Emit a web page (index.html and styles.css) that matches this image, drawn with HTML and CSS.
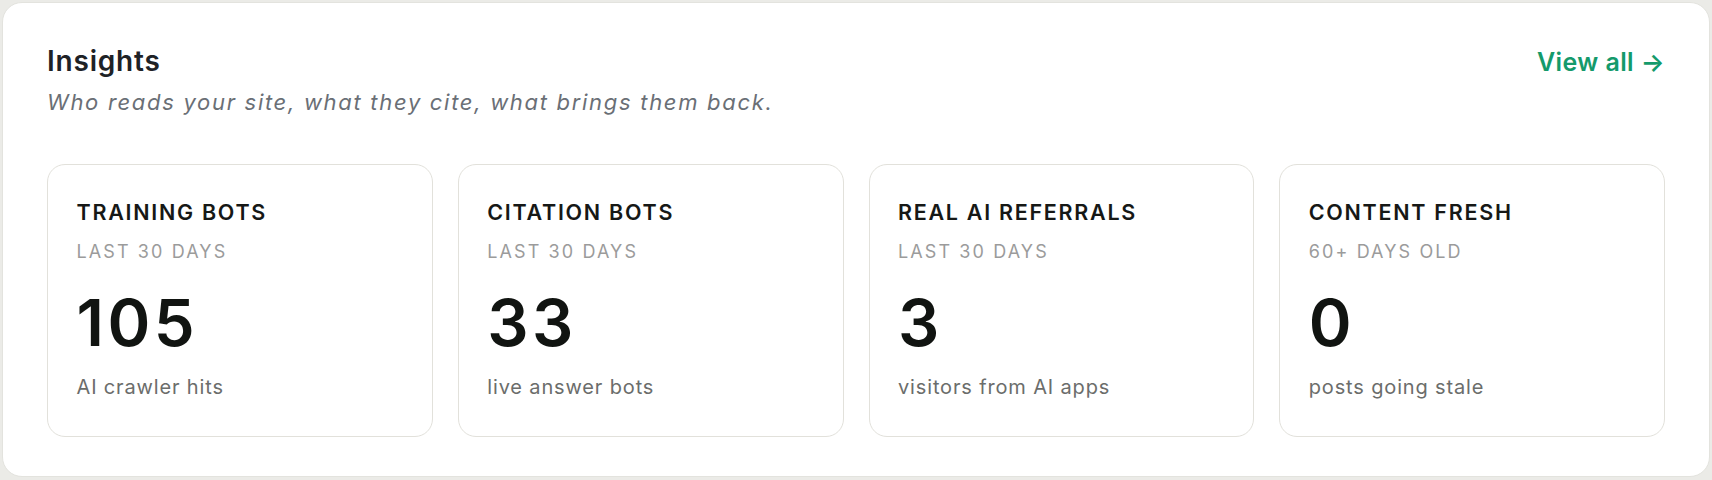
FILE: index.html
```html
<!DOCTYPE html>
<html lang="en">
<head>
<meta charset="utf-8">
<title>Insights</title>
<link rel="stylesheet" href="styles.css">
</head>
<body>
<section class="panel">
  <header class="panel-head">
    <div class="head-text">
      <h2 class="title">Insights</h2>
      <p class="subtitle">Who reads your site, what they cite, what brings them back.</p>
    </div>
    <a class="view-all" href="#">View all →</a>
  </header>
  <div class="stats">
    <div class="stat">
      <div class="stat-label">TRAINING BOTS</div>
      <div class="stat-period">LAST 30 DAYS</div>
      <div class="stat-value">105</div>
      <div class="stat-desc">AI crawler hits</div>
    </div>
    <div class="stat">
      <div class="stat-label">CITATION BOTS</div>
      <div class="stat-period">LAST 30 DAYS</div>
      <div class="stat-value">33</div>
      <div class="stat-desc">live answer bots</div>
    </div>
    <div class="stat">
      <div class="stat-label">REAL AI REFERRALS</div>
      <div class="stat-period">LAST 30 DAYS</div>
      <div class="stat-value">3</div>
      <div class="stat-desc">visitors from AI apps</div>
    </div>
    <div class="stat">
      <div class="stat-label">CONTENT FRESH</div>
      <div class="stat-period">60+ DAYS OLD</div>
      <div class="stat-value">0</div>
      <div class="stat-desc">posts going stale</div>
    </div>
  </div>
</section>
</body>
</html>
```

FILE: styles.css
```css
html, body {
  margin: 0;
  padding: 0;
}
body {
  background: #ebebe7;
  padding: 2px 2px 3px 2px;
  font-family: Inter, "Noto Sans", "Liberation Sans", sans-serif;
  box-sizing: border-box;
  height: 480px;
}
.panel {
  box-sizing: border-box;
  height: 475px;
  background: #ffffff;
  border: 1px solid #e3e3de;
  border-radius: 20px;
  padding: 42px 44px 0 44px;
}
.panel-head {
  display: flex;
  justify-content: space-between;
  align-items: flex-start;
}
.title {
  margin: 0;
  font-size: 28px;
  line-height: 1.2;
  font-weight: 600;
  letter-spacing: 0.8px;
  color: #1e2226;
}
.subtitle {
  margin: 8.5px 0 0 0;
  font-size: 22px;
  line-height: 1.4;
  font-style: italic;
  letter-spacing: 1.7px;
  color: #6a6f76;
}
.view-all {
  margin-top: 2px;
  font-size: 25px;
  line-height: 1.2;
  font-weight: 600;
  letter-spacing: 0.4px;
  color: #149a6b;
  text-decoration: none;
}
.stats {
  margin-top: 46px;
  display: grid;
  grid-template-columns: repeat(4, 1fr);
  gap: 25px;
}
.stat {
  box-sizing: border-box;
  height: 273px;
  border: 1.5px solid #e2e1db;
  border-radius: 18px;
  padding: 35.5px 28px 0 28.5px;
}
.stat-label {
  font-size: 21.5px;
  line-height: 1.2;
  font-weight: 600;
  letter-spacing: 0.08em;
  color: #161816;
}
.stat-period {
  margin-top: 15px;
  font-size: 18px;
  line-height: 1.2;
  letter-spacing: 2.1px;
  color: #9b9b9b;
}
.stat-value {
  margin-top: 27px;
  font-size: 65px;
  line-height: 1;
  font-weight: 600;
  letter-spacing: 3.5px;
  color: #111411;
}
.stat-desc {
  margin-top: 18.5px;
  font-size: 20px;
  line-height: 1.4;
  letter-spacing: 0.85px;
  color: #6b6d6b;
}
```
